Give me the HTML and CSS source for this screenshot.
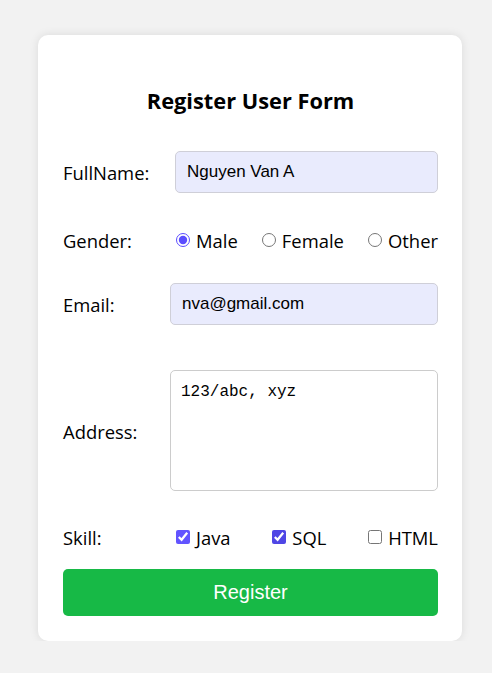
FILE: index.html
```html
<!DOCTYPE html>
<html lang="en">
<head>
<meta charset="utf-8">
<title>Register User Form</title>
<link rel="stylesheet" href="styles.css">
</head>
<body>
<form class="card">
  <h2 class="title">Register User Form</h2>
  <div class="row row-name">
    <label class="lbl" for="fullname">FullName:</label>
    <input class="field field-name" id="fullname" type="text" value="Nguyen Van A">
  </div>
  <div class="row row-gender">
    <span class="lbl">Gender:</span>
    <div class="group">
      <label class="opt"><input type="radio" name="g" checked>Male</label>
      <label class="opt"><input type="radio" name="g">Female</label>
      <label class="opt"><input type="radio" name="g">Other</label>
    </div>
  </div>
  <div class="row row-email">
    <label class="lbl" for="email">Email:</label>
    <input class="field field-email" id="email" type="text" value="nva@gmail.com">
  </div>
  <div class="row row-address">
    <label class="lbl" for="addr">Address:</label>
    <textarea class="area" id="addr" spellcheck="false">123/abc, xyz</textarea>
  </div>
  <div class="row row-skill">
    <span class="lbl">Skill:</span>
    <div class="group">
      <label class="opt"><input type="checkbox" class="chk-hover" checked>Java</label>
      <label class="opt"><input type="checkbox" checked>SQL</label>
      <label class="opt"><input type="checkbox">HTML</label>
    </div>
  </div>
  <button type="button" class="btn">Register</button>
</form>
</body>
</html>
```
FILE: styles.css
```css
html, body {
  margin: 0;
  padding: 0;
  background: #f2f2f2;
}
body {
  padding: 35px 0 0 38px;
  font-family: "Open Sans", "Noto Sans", sans-serif;
  color: #000;
}
.card {
  width: 424px;
  box-sizing: border-box;
  background: #fff;
  border-radius: 10px;
  box-shadow: 0 0 10px rgba(0, 0, 0, 0.1);
  padding: 25px 24px 25px 25px;
  display: flex;
  flex-direction: column;
}
.title {
  margin: 27px 0 0;
  text-align: center;
  font-size: 21.8px;
  line-height: 27px;
  font-weight: 700;
}
.row {
  display: flex;
  align-items: center;
  justify-content: space-between;
}
.lbl {
  font-size: 18.4px;
  line-height: 24px;
  padding-top: 2px;
}
.row-name { margin-top: 37px; height: 42px; }
.row-gender { margin-top: 35px; height: 24px; }
.row-email { margin-top: 31px; height: 42px; }
.row-address { margin-top: 45px; height: 121px; }
.row-skill { margin-top: 34px; height: 24px; }
.field {
  box-sizing: border-box;
  height: 42px;
  border: 1px solid #cfcfd8;
  border-radius: 5px;
  background: #e9ebfd;
  padding: 0 11px;
  font-family: "Liberation Sans", Arial, sans-serif;
  font-size: 17px;
  color: #000;
  outline: none;
}
.field-name { width: 263px; }
.field-email { width: 268px; }
.area {
  box-sizing: border-box;
  width: 268px;
  height: 121px;
  border: 1px solid #cccccc;
  border-radius: 5px;
  padding: 11px 10px;
  font-family: "Liberation Mono", monospace;
  font-size: 16px;
  line-height: 20px;
  resize: none;
  color: #000;
  outline: none;
}
.group {
  width: 263px;
  display: flex;
  justify-content: space-between;
  align-items: center;
}
.opt {
  display: flex;
  align-items: center;
  font-size: 18.4px;
  line-height: 24px;
  padding-top: 2px;
}
.opt input {
  margin: 0 6px 2px 1px;
  width: 14px;
  height: 14px;
  accent-color: #4f46e5;
}
.opt .chk-hover {
  accent-color: #6254ff;
}
.opt input[type="radio"] {
  accent-color: #5b4dff;
}
.btn {
  margin-top: 20px;
  height: 47px;
  width: 100%;
  border: none;
  border-radius: 5px;
  background: #17b946;
  color: #fff;
  font-family: "Liberation Sans", Arial, sans-serif;
  font-size: 20px;
  cursor: pointer;
}
```
